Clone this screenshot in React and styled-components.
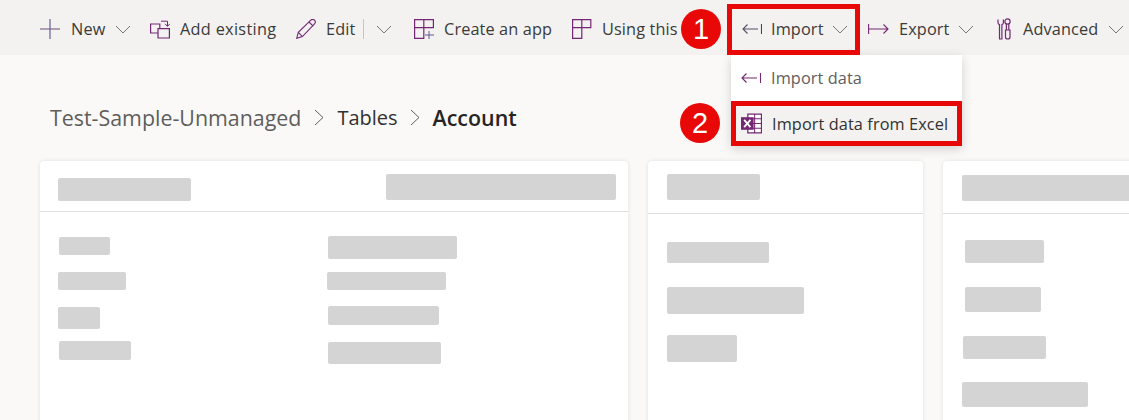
import React from "react";
import styled, { createGlobalStyle } from "styled-components";

const Global = createGlobalStyle`
  html, body { margin: 0; padding: 0; background: #faf9f8; }
  body { font-family: "Open Sans", "Noto Sans", sans-serif; color: #323130; }
`;
const Page = styled.div`
  position: relative;
  width: 1129px;
  height: 420px;
  overflow: hidden;
  background: #faf9f8;
`;
const Toolbar = styled.div`
  display: flex;
  align-items: center;
  height: 55px;
  padding: 3px 0 0 40px;
  box-sizing: border-box;
  background: #f3f2f1;
  white-space: nowrap;
`;
const Command = styled.div`
  display: flex;
  flex: none;
  align-items: center;
  width: ${(p) => p.$w}px;
`;
const IconSlot = styled.span`
  display: flex;
  flex: none;
  width: ${(p) => p.$w || 20}px;
  margin-right: ${(p) => p.$mr || 10}px;
`;
const CommandLabel = styled.span`
  font-size: 16.3px;
  letter-spacing: ${(p) => p.$ls ?? 0.12}px;
  line-height: 20px;
  color: #3b3a39;
`;
const Chevron = styled.span`
  display: flex;
  flex: none;
  margin-left: ${(p) => p.$ml || 10}px;
`;
const Divider = styled.span`
  flex: none;
  width: 1px;
  height: 20px;
  margin-left: 8px;
  background: #c8c6c4;
`;
const Crumbs = styled.div`
  display: flex;
  align-items: center;
  height: 28px;
  margin: 48px 0 30px 50px;
  font-size: 21.4px;
  white-space: nowrap;
`;
const Crumb = styled.span`
  color: ${(p) => (p.$strong ? "#252423" : p.$dim ? "#605e5c" : "#323130")};
  font-weight: ${(p) => (p.$strong ? 600 : 400)};
  font-size: ${(p) => p.$size || 21.4}px;
`;
const CrumbSep = styled.span`
  display: flex;
  flex: none;
  width: ${(p) => p.$w || 36}px;
  justify-content: center;
`;
const Cards = styled.div`
  display: flex;
  gap: 20px;
  margin-left: 40px;
`;
const Card = styled.section`
  flex: none;
  width: ${(p) => p.$w}px;
  height: 300px;
  background: #fff;
  border-radius: 4px;
  box-shadow: 0 0 4px rgba(0, 0, 0, 0.1);
`;
const CardHead = styled.div`
  display: flex;
  justify-content: space-between;
  height: ${(p) => p.$h}px;
  border-bottom: 1px solid #e1dfdd;
  box-sizing: border-box;
`;
const Bar = styled.div`
  flex: none;
  width: ${(p) => p.$w}px;
  height: ${(p) => p.$h}px;
  margin-top: ${(p) => p.$t || 0}px;
  margin-left: ${(p) => p.$l || 0}px;
  margin-right: ${(p) => p.$r || 0}px;
  background: #d4d4d4;
  border-radius: 2px;
`;
const CardBody = styled.div`
  display: flex;
`;
const Column = styled.div`
  display: flex;
  flex-direction: column;
  width: ${(p) => p.$w}px;
`;
const Menu = styled.div`
  position: absolute;
  left: 731px;
  top: 55px;
  width: 231px;
  height: 91px;
  background: #fff;
  box-shadow: 0 3px 10px rgba(0, 0, 0, 0.16);
`;
const MenuItem = styled.div`
  display: flex;
  align-items: center;
  height: ${(p) => (p.$active ? 45 : 46)}px;
  padding-left: ${(p) => (p.$active ? 5 : 10)}px;
  box-sizing: border-box;
  background: ${(p) => (p.$active ? "#f3f2f1" : "#fff")};
  border: ${(p) => (p.$active ? "5px solid #e80808" : "0")};
`;
const MenuLabel = styled.span`
  font-size: 16.3px;
  letter-spacing: 0.1px;
  color: ${(p) => (p.$active ? "#323130" : "#605e5c")};
  margin-left: 10px;
  white-space: nowrap;
`;
const Highlight = styled.div`
  position: absolute;
  left: 727px;
  top: 4px;
  width: 133px;
  height: 51px;
  box-sizing: border-box;
  border: 5px solid #e80808;
`;
const Badge = styled.div`
  position: absolute;
  left: ${(p) => p.$x - 20}px;
  top: ${(p) => p.$y - 20}px;
  width: 40px;
  height: 40px;
  display: flex;
  align-items: center;
  justify-content: center;
  border-radius: 50%;
  background: #e80808;
  color: #fff;
  font-family: "Liberation Sans", Arial, sans-serif;
  font-size: 29px;
`;

const P = "#742774";
const Down = () => (
  <svg width="16" height="9" viewBox="0 0 16 9" fill="none" stroke="#797775" strokeWidth="1">
    <path d="M1 1l7 7 7-7" />
  </svg>
);
const Plus = () => (
  <svg width="20" height="20" viewBox="0 0 20 20" fill="none" strokeWidth="1.3">
    <path d="M0 10h20" stroke="#8a6f90" />
    <path d="M10 0v20" stroke="#6f6aa0" />
  </svg>
);
const AddExisting = () => (
  <svg width="20" height="20" viewBox="0 0 20 20" fill="none" stroke={P} strokeWidth="1.2">
    <path d="M8 14H.6V5h9.2v4" />
    <path d="M8 9.600h11.400V19H8z" />
    <path d="M11 2.200h6.500V7M15 4.800l2.500 2.600 2.300-2.600" strokeWidth="1" />
  </svg>
);
const Pencil = () => (
  <svg width="20" height="20" viewBox="0 0 20 20" fill="none" stroke={P} strokeWidth="1.1">
    <path d="M.7 19.300l1.600-6L14.800 1.100c1-1 2.800-.9 3.700.1s1 2.600 0 3.600L6.400 17.600z" />
    <path d="M2.300 13.300l4.100 4.300M13 3l4.200 4.200" />
  </svg>
);
const CreateApp = () => (
  <svg width="20" height="20" viewBox="0 0 20 20" fill="none" stroke={P} strokeWidth="1.2">
    <path d="M.6 8.600h9.200v10.800H.6zM9.800.6h9.600v8H9.800zM.6.6h9.200v8H.6z" />
    <path d="M15 12v8M11 16h9" stroke="#5f5a90" strokeWidth="1" />
  </svg>
);
const UsingThis = () => (
  <svg width="20" height="20" viewBox="0 0 20 20" fill="none" stroke={P} strokeWidth="1.2">
    <path d="M.6 8.600h9.200v10.800H.6zM9.800.6h9v8h-9zM.6.6h9.200v8H.6z" />
  </svg>
);
const ImportIcon = ({ tone = "#55506a" }) => (
  <svg width="20" height="12" viewBox="0 0 20 12" fill="none" stroke={P} strokeWidth="1.1">
    <path d="M1 6h15M5.500 1.500L1 6l4.500 4.500" stroke={tone} />
    <path d="M19.500 1v10" />
  </svg>
);
const ExportIcon = () => (
  <svg width="21" height="12" viewBox="0 0 21 12" fill="none" stroke={P} strokeWidth="1.1">
    <path d="M.6 1v10" />
    <path d="M1 6h19M15.500 1.500L20 6l-4.500 4.500" />
  </svg>
);
const Tools = () => (
  <svg width="14" height="22" viewBox="0 0 14 22" fill="none" stroke={P} strokeWidth="1.2">
    <path d="M1 1.500v3c0 1 .7 2 1.500 2.200V21h2.400V6.700C5.700 6.400 6.400 5.500 6.400 4.500v-3" />
    <circle cx="10.500" cy="3.500" r="2.600" />
    <path d="M9.400 6v6h2.400V6M8.500 12h4.500v7c0 1-1 2-2.200 2s-2.300-1-2.300-2z" />
  </svg>
);
const Excel = () => (
  <svg width="21" height="21" viewBox="0 0 20 20">
    <path d="M6.500 1h13v18h-13z" fill="#fff" stroke={P} strokeWidth="1.200" />
    <path d="M6.500 5.500h13M6.500 10h13M6.500 14.500h13M13 1v18" stroke={P} strokeWidth="1" fill="none" />
    <rect x="0" y="4" width="12" height="12" fill={P} />
    <path d="M3 6.500l6 7M9 6.500l-6 7" stroke="#fff" strokeWidth="1.700" fill="none" />
  </svg>
);
const Sep = () => (
  <svg width="10" height="17" viewBox="0 0 10 17" fill="none" stroke="#605e5c" strokeWidth="1">
    <path d="M1 1l8 7.500-8 7.500" />
  </svg>
);

export default function App() {
  return (
    <Page>
      <Global />
      <Toolbar>
        <Command $w={110}>
          <IconSlot $mr={11}><Plus /></IconSlot>
          <CommandLabel>New</CommandLabel>
          <Chevron><Down /></Chevron>
        </Command>
        <Command $w={146}>
          <IconSlot><AddExisting /></IconSlot>
          <CommandLabel $ls={0.3}>Add existing</CommandLabel>
        </Command>
        <Command $w={118}>
          <IconSlot><Pencil /></IconSlot>
          <CommandLabel>Edit</CommandLabel>
          <Divider />
          <Chevron $ml={12}><Down /></Chevron>
        </Command>
        <Command $w={158}>
          <IconSlot><CreateApp /></IconSlot>
          <CommandLabel>Create an app</CommandLabel>
        </Command>
        <Command $w={170}>
          <IconSlot><UsingThis /></IconSlot>
          <CommandLabel>Using this table</CommandLabel>
        </Command>
        <Command $w={126}>
          <IconSlot $mr={9}><ImportIcon /></IconSlot>
          <CommandLabel>Import</CommandLabel>
          <Chevron $ml={8}><Down /></Chevron>
        </Command>
        <Command $w={129}>
          <IconSlot $w={21}><ExportIcon /></IconSlot>
          <CommandLabel>Export</CommandLabel>
          <Chevron $ml={8}><Down /></Chevron>
        </Command>
        <Command $w={128}>
          <IconSlot $w={14} $mr={12}><Tools /></IconSlot>
          <CommandLabel>Advanced</CommandLabel>
          <Chevron><Down /></Chevron>
        </Command>
      </Toolbar>
      <Crumbs>
        <Crumb $dim>Test-Sample-Unmanaged</Crumb>
        <CrumbSep><Sep /></CrumbSep>
        <Crumb $size={20}>Tables</Crumb>
        <CrumbSep $w={35}><Sep /></CrumbSep>
        <Crumb $strong>Account</Crumb>
      </Crumbs>
      <Cards>
        <Card $w={588}>
          <CardHead $h={51}>
            <Bar $w={133} $h={23} $t={17} $l={18} />
            <Bar $w={230} $h={26} $t={13} $r={12} />
          </CardHead>
          <CardBody>
            <Column $w={287}>
              <Bar $w={51} $h={18} $t={25} $l={19} />
              <Bar $w={68} $h={18} $t={17} $l={18} />
              <Bar $w={42} $h={22} $t={17} $l={18} />
              <Bar $w={72} $h={19} $t={12} $l={19} />
            </Column>
            <Column $w={300}>
              <Bar $w={129} $h={23} $t={24} $l={1} />
              <Bar $w={119} $h={18} $t={13} />
              <Bar $w={111} $h={19} $t={16} $l={1} />
              <Bar $w={113} $h={22} $t={17} $l={1} />
            </Column>
          </CardBody>
        </Card>
        <Card $w={275}>
          <CardHead $h={53}>
            <Bar $w={93} $h={26} $t={13} $l={19} />
          </CardHead>
          <CardBody>
            <Column $w={275}>
              <Bar $w={102} $h={21} $t={28} $l={19} />
              <Bar $w={137} $h={27} $t={24} $l={19} />
              <Bar $w={70} $h={27} $t={21} $l={19} />
            </Column>
          </CardBody>
        </Card>
        <Card $w={300}>
          <CardHead $h={53}>
            <Bar $w={280} $h={26} $t={14} $l={19} />
          </CardHead>
          <CardBody>
            <Column $w={200}>
              <Bar $w={79} $h={23} $t={26} $l={22} />
              <Bar $w={76} $h={25} $t={24} $l={22} />
              <Bar $w={83} $h={23} $t={24} $l={20} />
              <Bar $w={126} $h={25} $t={23} $l={19} />
            </Column>
          </CardBody>
        </Card>
      </Cards>
      <Menu>
        <MenuItem>
          <ImportIcon tone={P} />
          <MenuLabel>Import data</MenuLabel>
        </MenuItem>
        <MenuItem $active>
          <Excel />
          <MenuLabel $active>Import data from Excel</MenuLabel>
        </MenuItem>
      </Menu>
      <Highlight />
      <Badge $x={701} $y={29}>1</Badge>
      <Badge $x={700} $y={123}>2</Badge>
    </Page>
  );
}
